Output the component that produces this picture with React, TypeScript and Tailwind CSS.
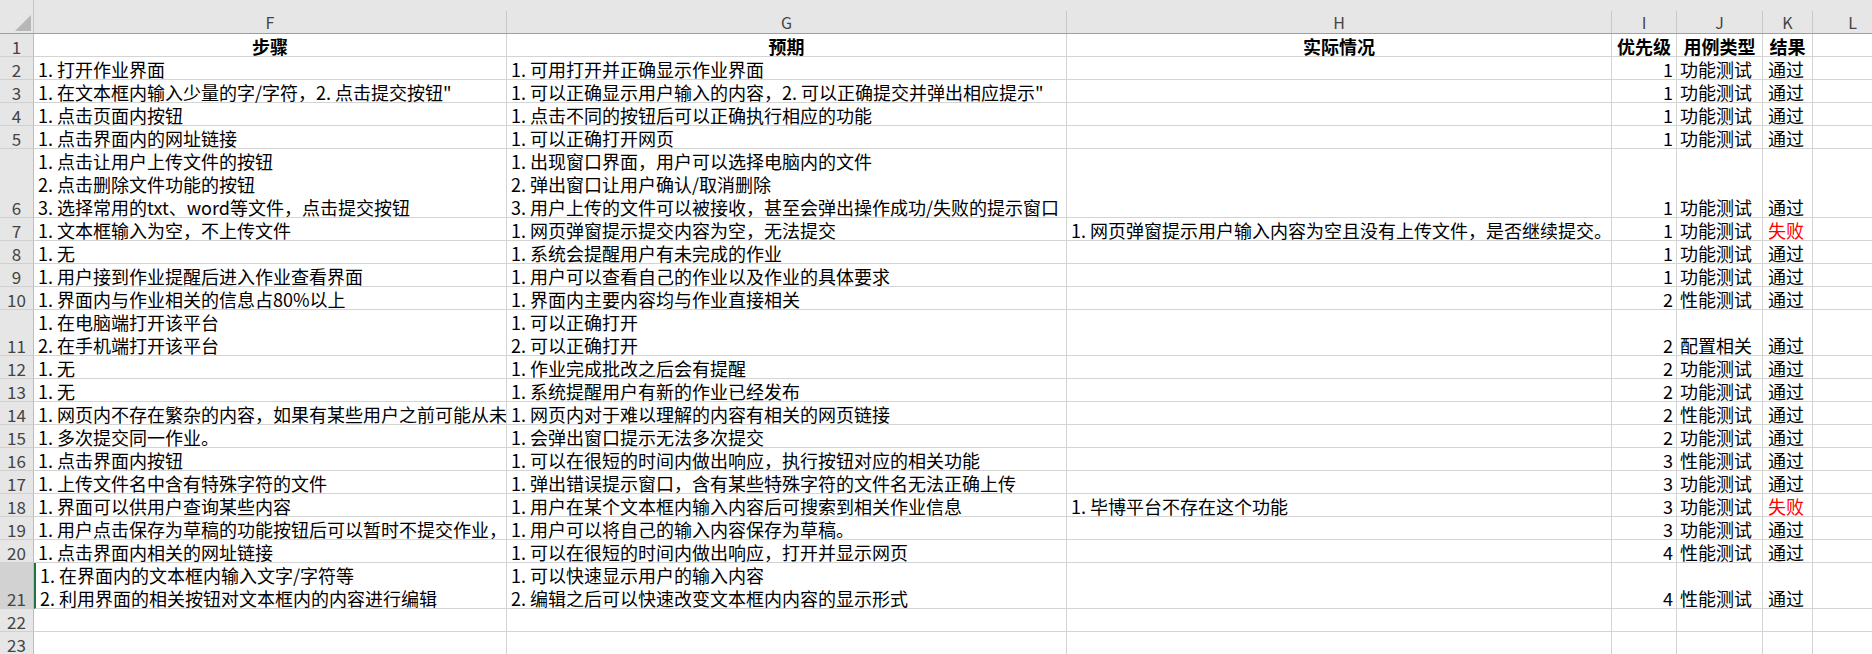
const FONT = "font-['DengXian','Noto_Sans_CJK_SC',sans-serif]";

type Row = {
  n: number;
  lines: number;
  f?: string[];
  g?: string[];
  h?: string;
  pri?: number;
  kind?: string;
  result?: string;
};

const COLS = [
  { key: "F", w: "w-[473px]" },
  { key: "G", w: "w-[560px]" },
  { key: "H", w: "w-[545px]" },
  { key: "I", w: "w-[65px]" },
  { key: "J", w: "w-[86px]" },
  { key: "K", w: "w-[50px]" },
  { key: "L", w: "w-[80px]" },
];

const ROWS: Row[] = [
  { n: 2, lines: 1, f: ["1. 打开作业界面"], g: ["1. 可用打开并正确显示作业界面"], pri: 1, kind: "功能测试", result: "通过" },
  { n: 3, lines: 1, f: ["1. 在文本框内输入少量的字/字符，2. 点击提交按钮\""], g: ["1. 可以正确显示用户输入的内容，2. 可以正确提交并弹出相应提示\""], pri: 1, kind: "功能测试", result: "通过" },
  { n: 4, lines: 1, f: ["1. 点击页面内按钮"], g: ["1. 点击不同的按钮后可以正确执行相应的功能"], pri: 1, kind: "功能测试", result: "通过" },
  { n: 5, lines: 1, f: ["1. 点击界面内的网址链接"], g: ["1. 可以正确打开网页"], pri: 1, kind: "功能测试", result: "通过" },
  {
    n: 6,
    lines: 3,
    f: ["1. 点击让用户上传文件的按钮", "2. 点击删除文件功能的按钮", "3. 选择常用的txt、word等文件，点击提交按钮"],
    g: ["1. 出现窗口界面，用户可以选择电脑内的文件", "2. 弹出窗口让用户确认/取消删除", "3. 用户上传的文件可以被接收，甚至会弹出操作成功/失败的提示窗口"],
    pri: 1,
    kind: "功能测试",
    result: "通过",
  },
  { n: 7, lines: 1, f: ["1. 文本框输入为空，不上传文件"], g: ["1. 网页弹窗提示提交内容为空，无法提交"], h: "1. 网页弹窗提示用户输入内容为空且没有上传文件，是否继续提交。", pri: 1, kind: "功能测试", result: "失败" },
  { n: 8, lines: 1, f: ["1. 无"], g: ["1. 系统会提醒用户有未完成的作业"], pri: 1, kind: "功能测试", result: "通过" },
  { n: 9, lines: 1, f: ["1. 用户接到作业提醒后进入作业查看界面"], g: ["1. 用户可以查看自己的作业以及作业的具体要求"], pri: 1, kind: "功能测试", result: "通过" },
  { n: 10, lines: 1, f: ["1. 界面内与作业相关的信息占80%以上"], g: ["1. 界面内主要内容均与作业直接相关"], pri: 2, kind: "性能测试", result: "通过" },
  { n: 11, lines: 2, f: ["1. 在电脑端打开该平台", "2. 在手机端打开该平台"], g: ["1. 可以正确打开", "2. 可以正确打开"], pri: 2, kind: "配置相关", result: "通过" },
  { n: 12, lines: 1, f: ["1. 无"], g: ["1. 作业完成批改之后会有提醒"], pri: 2, kind: "功能测试", result: "通过" },
  { n: 13, lines: 1, f: ["1. 无"], g: ["1. 系统提醒用户有新的作业已经发布"], pri: 2, kind: "功能测试", result: "通过" },
  { n: 14, lines: 1, f: ["1. 网页内不存在繁杂的内容，如果有某些用户之前可能从未使用过该平台，也可以快速上手"], g: ["1. 网页内对于难以理解的内容有相关的网页链接"], pri: 2, kind: "性能测试", result: "通过" },
  { n: 15, lines: 1, f: ["1. 多次提交同一作业。"], g: ["1. 会弹出窗口提示无法多次提交"], pri: 2, kind: "功能测试", result: "通过" },
  { n: 16, lines: 1, f: ["1. 点击界面内按钮"], g: ["1. 可以在很短的时间内做出响应，执行按钮对应的相关功能"], pri: 3, kind: "性能测试", result: "通过" },
  { n: 17, lines: 1, f: ["1. 上传文件名中含有特殊字符的文件"], g: ["1. 弹出错误提示窗口，含有某些特殊字符的文件名无法正确上传"], pri: 3, kind: "功能测试", result: "通过" },
  { n: 18, lines: 1, f: ["1. 界面可以供用户查询某些内容"], g: ["1. 用户在某个文本框内输入内容后可搜索到相关作业信息"], h: "1. 毕博平台不存在这个功能", pri: 3, kind: "功能测试", result: "失败" },
  { n: 19, lines: 1, f: ["1. 用户点击保存为草稿的功能按钮后可以暂时不提交作业，下次登录后继续编辑"], g: ["1. 用户可以将自己的输入内容保存为草稿。"], pri: 3, kind: "功能测试", result: "通过" },
  { n: 20, lines: 1, f: ["1. 点击界面内相关的网址链接"], g: ["1. 可以在很短的时间内做出响应，打开并显示网页"], pri: 4, kind: "性能测试", result: "通过" },
  {
    n: 21,
    lines: 2,
    f: ["1. 在界面内的文本框内输入文字/字符等", "2. 利用界面的相关按钮对文本框内的内容进行编辑"],
    g: ["1. 可以快速显示用户的输入内容", "2. 编辑之后可以快速改变文本框内内容的显示形式"],
    pri: 4,
    kind: "性能测试",
    result: "通过",
  },
  { n: 22, lines: 1 },
  { n: 23, lines: 1 },
];

const HEIGHTS: Record<number, string> = {
  1: "h-[23px]",
  2: "h-[46px]",
  3: "h-[69px]",
};

function Cell({
  w,
  children,
  className = "",
}: {
  w: string;
  children?: React.ReactNode;
  className?: string;
}) {
  return (
    <div
      className={`${w} shrink-0 h-full flex flex-col justify-end overflow-x-clip whitespace-nowrap border-r border-b border-[#d4d4d4] ${className}`}
    >
      {children}
    </div>
  );
}

function Lines({ items }: { items?: string[] }) {
  if (!items) return null;
  return (
    <>
      {items.map((t, i) => (
        <div key={i} className="leading-[23px] translate-y-[2px]">
          {t}
        </div>
      ))}
    </>
  );
}

function ColumnHeaders() {
  return (
    <div className="flex h-[34px] bg-[#e6e6e6] border-b border-[#9f9f9f]">
      <div className="w-[34px] shrink-0 h-full relative border-r border-[#c6c6c6]">
        <svg className="absolute left-[14px] top-[14px]" width="18" height="18" viewBox="0 0 18 18">
          <polygon points="17,1 17,17 1,17" fill="#b7b7b7" />
        </svg>
      </div>
      {COLS.map((c) => (
        <div key={c.key} className={`${c.w} shrink-0 h-full flex flex-col justify-end`}>
          <div className="h-[22px] border-r border-[#c9c9c9] flex items-end justify-center pb-[1px] text-[16px] leading-[20px] text-[#444]">
            {c.key}
          </div>
        </div>
      ))}
    </div>
  );
}

function RowNumber({ n, h, selected }: { n: number; h: string; selected?: boolean }) {
  return (
    <div
      className={`w-[34px] shrink-0 ${h} flex flex-col justify-end items-center border-r border-b border-r-[#bdbdbd] border-b-[#d0d0d0] text-[17px] text-[#444] ${
        selected ? "bg-[#d2d2d2]" : "bg-[#e6e6e6]"
      }`}
    >
      <div className="leading-[23px] translate-y-[2px]">{n}</div>
    </div>
  );
}

export default function App() {
  return (
    <div className={`w-[1872px] h-[654px] overflow-hidden bg-white text-[18px] text-black ${FONT}`}>
      <ColumnHeaders />

      {/* header row */}
      <div className="flex h-[23px]">
        <RowNumber n={1} h="h-[23px]" />
        {["步骤", "预期", "实际情况", "优先级", "用例类型", "结果", ""].map((t, i) => (
          <Cell key={i} w={COLS[i].w} className="items-center font-bold">
            <div className="leading-[23px] translate-y-[2px]">{t}</div>
          </Cell>
        ))}
      </div>

      {ROWS.map((r) => {
        const h = HEIGHTS[r.lines];
        return (
          <div key={r.n} className={`flex ${h}`}>
            <RowNumber n={r.n} h={h} selected={r.n === 21} />
            <Cell w={COLS[0].w} className={`pl-[4px] ${r.n === 21 ? "border-l-2 border-l-[#217346] pl-[2px]" : ""}`}>
              <Lines items={r.f} />
            </Cell>
            <Cell w={COLS[1].w} className="pl-[4px]">
              <Lines items={r.g} />
            </Cell>
            <Cell w={COLS[2].w} className="pl-[4px]">
              {r.h && <Lines items={[r.h]} />}
            </Cell>
            <Cell w={COLS[3].w} className="items-end pr-[3px]">
              {r.pri !== undefined && <Lines items={[String(r.pri)]} />}
            </Cell>
            <Cell w={COLS[4].w} className="pl-[3px]">
              {r.kind && <Lines items={[r.kind]} />}
            </Cell>
            <Cell w={COLS[5].w} className={`pl-[5px] ${r.result === "失败" ? "text-[#ff0000]" : ""}`}>
              {r.result && <Lines items={[r.result]} />}
            </Cell>
            <Cell w={COLS[6].w} />
          </div>
        );
      })}
    </div>
  );
}
